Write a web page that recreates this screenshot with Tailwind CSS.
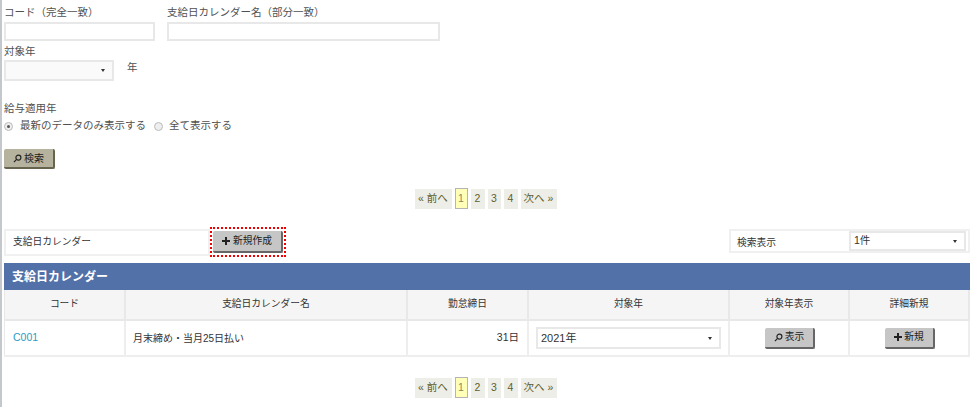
<!DOCTYPE html>
<html lang="ja">
<head>
  <meta charset="UTF-8"/>
  <title>支給日カレンダー</title>
  <script src="https://cdn.jsdelivr.net/npm/@tailwindcss/browser@4"></script>
</head>
<body class="bg-white h-[407px] overflow-hidden text-[#505050] text-[10.5px] font-['Liberation_Sans','Noto_Sans_CJK_JP',sans-serif]">
  <div class="h-[407px] border-l-2 border-[#c4c8cc] pl-[2px] pr-[6px]">

    <!-- Search form -->
    <div class="flex gap-3 pt-[6px]">
      <div class="w-[151px]">
        <div class="h-[16px] leading-[13px]">コード（完全一致）</div>
        <div class="h-[19px] border-2 border-[#e8e8e8] bg-white"></div>
      </div>
      <div class="w-[273px]">
        <div class="h-[16px] leading-[13px]">支給日カレンダー名（部分一致）</div>
        <div class="h-[19px] border-2 border-[#e8e8e8] bg-white"></div>
      </div>
    </div>
    <div class="h-[19px] pt-[2px] leading-[16px]">対象年</div>
    <div class="flex h-[21px]">
      <div class="w-[110px] border-2 border-[#e8e8e8] bg-[#fafafa] flex items-center justify-end pr-[7px]">
        <span class="w-0 h-0 border-x-[2.5px] border-x-transparent border-t-[3px] border-t-[#333]"></span>
      </div>
      <span class="ml-[13px] leading-[14px]">年</span>
    </div>

    <div class="mt-[20px] h-[17px] leading-[14px]">給与適用年</div>
    <div class="flex items-center h-[16px]">
      <span class="w-[9px] h-[9px] rounded-full border border-[#bbb] bg-[#eee] flex items-center justify-center"><span class="w-[3px] h-[3px] rounded-full bg-[#555]"></span></span>
      <span class="ml-[7px]">最新のデータのみ表示する</span>
      <span class="ml-[8px] w-[9px] h-[9px] rounded-full border border-[#bbb] bg-[#eee]"></span>
      <span class="ml-[6px]">全て表示する</span>
    </div>

    <button class="mt-[15px] w-[51px] h-[20px] flex items-center justify-center gap-[2px] rounded-[2px] bg-[#b5b29e] border-r-2 border-b-2 border-[#66644f] text-[#222] text-[10px]">
      <svg width="9" height="9" viewBox="0 0 10 10" fill="none" stroke="#222" stroke-width="1.3"><circle cx="6" cy="4" r="2.8"/><path d="M4 6 1 9"/></svg>
      検索
    </button>

    <!-- Pagination -->
    <div class="mt-[19px] h-[21px] flex items-center justify-center gap-[3px] text-[#5f5f2e] pr-[3px]">
      <span class="w-[37px] h-[20px] bg-[#eeeee8] flex items-center justify-center">« 前へ</span>
      <span class="w-[13px] h-[21px] bg-[#ffffb8] border border-[#b4b4b4] text-[#888860] flex items-center justify-center">1</span>
      <span class="w-[14px] h-[20px] bg-[#eeeee8] flex items-center justify-center">2</span>
      <span class="w-[13px] h-[20px] bg-[#eeeee8] flex items-center justify-center">3</span>
      <span class="w-[14px] h-[20px] bg-[#eeeee8] flex items-center justify-center">4</span>
      <span class="w-[36px] h-[20px] bg-[#eeeee8] flex items-center justify-center">次へ »</span>
    </div>

    <!-- Toolbar -->
    <div class="mt-[17px] h-[31px] flex items-start justify-between text-[9.75px]">
      <div class="relative mt-[3px] w-[206px] h-[27px] border-2 border-[#f0f0f0] flex items-center pl-[7px] text-[#333]">
        支給日カレンダー
        <div class="absolute left-[204px] top-[-4px] w-[76px] h-[30px] border-2 border-dotted border-[#f00000] bg-white flex items-center justify-center">
          <button class="w-[70px] h-[22px] flex items-center justify-center gap-[3px] rounded-[2px] bg-[#c6c6c6] border-r-2 border-b-2 border-[#666] text-[#222]">
            <svg width="8" height="8" viewBox="0 0 8 8" fill="#222"><path d="M3 0h2v3h3v2H5v3H3V5H0V3h3z"/></svg>
            新規作成
          </button>
        </div>
      </div>
      <div class="mt-[3px] w-[241px] h-[24px] border-2 border-[#f0f0f0] flex">
        <span class="w-[118px] pl-[6px] pt-[5px] text-[#333]">検索表示</span>
        <div class="w-[117px] h-[20px] border-2 border-[#e8e8e8] flex items-center justify-between pl-[3px] pr-[7px] text-[#333] text-[10.5px]">
          1件
          <span class="w-0 h-0 border-x-[2.5px] border-x-transparent border-t-[3px] border-t-[#333]"></span>
        </div>
      </div>
    </div>

    <!-- Result table -->
    <div class="mt-[6px] h-[27px] bg-[#5271a9] text-white text-[12px] font-bold flex items-center pl-[8px]">支給日カレンダー</div>
    <div class="border-b-2 border-[#eeeeee] text-[#333] text-[9.75px]">
      <div class="grid grid-cols-[120px_282px_121px_201px_120px_122px] h-[31px] bg-[#f5f5f5] border-b-2 border-[#e8e8e8] items-stretch">
        <div class="flex items-center justify-center border-l border-[#e8e8e8]">コード</div>
        <div class="flex items-center justify-center border-l-2 border-[#e8e8e8]">支給日カレンダー名</div>
        <div class="flex items-center justify-center border-l-2 border-[#e8e8e8]">勤怠締日</div>
        <div class="flex items-center justify-center border-l-2 border-[#e8e8e8]">対象年</div>
        <div class="flex items-center justify-center border-l-2 border-[#e8e8e8]">対象年表示</div>
        <div class="flex items-center justify-center border-x-2 border-[#e8e8e8]">詳細新規</div>
      </div>
      <div class="grid grid-cols-[120px_282px_121px_201px_120px_122px] h-[34px] items-stretch">
        <div class="flex items-center pl-[8px] border-l border-[#e8e8e8] text-[#2a9bc4] text-[10.5px]">C001</div>
        <div class="flex items-center pl-[7px] border-l-2 border-[#eeeeee] text-[10px]">月末締め・当月25日払い</div>
        <div class="flex items-center justify-end pr-[8px] border-l-2 border-[#eeeeee] text-[10.5px]">31日</div>
        <div class="flex items-center border-l-2 border-[#eeeeee] pl-[7px]">
          <div class="w-[185px] h-[22px] border-2 border-[#e8e8e8] flex items-center justify-between pl-[3px] pr-[7px] text-[11px]">
            2021年
            <span class="w-0 h-0 border-x-[2.5px] border-x-transparent border-t-[3px] border-t-[#333]"></span>
          </div>
        </div>
        <div class="flex items-center justify-center border-l-2 border-[#eeeeee] pl-[2px]">
          <button class="w-[50px] h-[21px] flex items-center justify-center gap-[2px] rounded-[2px] bg-[#c6c6c6] border-r-2 border-b-2 border-[#666] text-[#222]">
            <svg width="9" height="9" viewBox="0 0 10 10" fill="none" stroke="#222" stroke-width="1.3"><circle cx="6" cy="4" r="2.8"/><path d="M4 6 1 9"/></svg>
            表示
          </button>
        </div>
        <div class="flex items-center justify-center border-x-2 border-[#eeeeee] pl-[2px]">
          <button class="w-[50px] h-[21px] flex items-center justify-center gap-[2px] rounded-[2px] bg-[#c6c6c6] border-r-2 border-b-2 border-[#666] text-[#222]">
            <svg width="8" height="8" viewBox="0 0 8 8" fill="#222"><path d="M3 0h2v3h3v2H5v3H3V5H0V3h3z"/></svg>
            新規
          </button>
        </div>
      </div>
    </div>

    <!-- Pagination -->
    <div class="mt-[20px] h-[21px] flex items-center justify-center gap-[3px] text-[#5f5f2e] pr-[3px]">
      <span class="w-[37px] h-[20px] bg-[#eeeee8] flex items-center justify-center">« 前へ</span>
      <span class="w-[13px] h-[21px] bg-[#ffffb8] border border-[#b4b4b4] text-[#888860] flex items-center justify-center">1</span>
      <span class="w-[14px] h-[20px] bg-[#eeeee8] flex items-center justify-center">2</span>
      <span class="w-[13px] h-[20px] bg-[#eeeee8] flex items-center justify-center">3</span>
      <span class="w-[14px] h-[20px] bg-[#eeeee8] flex items-center justify-center">4</span>
      <span class="w-[36px] h-[20px] bg-[#eeeee8] flex items-center justify-center">次へ »</span>
    </div>
  </div>
</body>
</html>
